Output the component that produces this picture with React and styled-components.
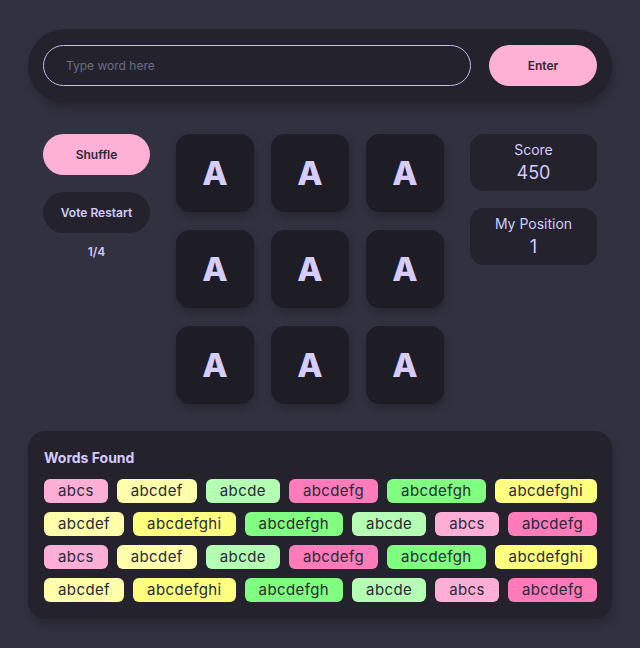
import React from "react";
import styled, { createGlobalStyle } from "styled-components";

const Global = createGlobalStyle`
  html, body { margin: 0; padding: 0; background: #32313f; }
  body { font-family: Inter, "Open Sans", "DejaVu Sans", sans-serif; }
  * { box-sizing: border-box; }
`;

const Page = styled.div`
  width: 640px;
  min-height: 648px;
  padding: 29px 28px 0;
  display: flex;
  flex-direction: column;
`;

const TopBar = styled.div`
  height: 74px;
  background: #23222d;
  border-radius: 37px;
  padding: 16px 15px 17px;
  display: flex;
  gap: 18px;
  box-shadow: 2px 6px 10px rgba(0, 0, 0, 0.22);
`;

const WordInput = styled.input`
  flex: 1;
  height: 41px;
  border: 1px solid #c3bbee;
  border-radius: 21px;
  background: #23222d;
  padding: 0 22px;
  font-family: inherit;
  font-size: 12px;
  color: #d6ccff;
  outline: none;
  &::placeholder { color: #6f6b86; }
`;

const PillButton = styled.button`
  width: ${(p) => p.$w || 107}px;
  height: 41px;
  border: none;
  border-radius: 21px;
  background: ${(p) => (p.$dark ? "#23222d" : "#ffb0d5")};
  color: ${(p) => (p.$dark ? "#d3cbfa" : "#2a2935")};
  font-family: inherit;
  font-weight: 600;
  font-size: 12px;
  cursor: pointer;
  padding: 0;
`;

const Middle = styled.div`
  margin-top: 31px;
  padding: 0 15px;
  display: flex;
  justify-content: space-between;
  align-items: flex-start;
`;

const LeftCol = styled.div`
  width: 107px;
  display: flex;
  flex-direction: column;
  align-items: center;
  gap: 17px;
`;

const Counter = styled.div`
  margin-top: -6px;
  color: #d3cbfa;
  font-weight: 600;
  font-size: 12px;
`;

const Grid = styled.div`
  display: grid;
  grid-template-columns: repeat(3, 78px);
  grid-auto-rows: 78px;
  column-gap: 17px;
  row-gap: 18px;
`;

const Tile = styled.div`
  background: #1e1d26;
  border-radius: 14px;
  display: flex;
  align-items: center;
  justify-content: center;
  color: #d5cdff;
  font-weight: 800;
  font-size: 33px;
  box-shadow: 1px 4px 8px rgba(0, 0, 0, 0.25);
`;

const RightCol = styled.div`
  width: 127px;
  display: flex;
  flex-direction: column;
  gap: 17px;
`;

const StatBox = styled.div`
  height: 57px;
  background: #23222d;
  border-radius: 14px;
  display: flex;
  flex-direction: column;
  align-items: center;
  justify-content: center;
  color: #d3cbfa;
`;

const StatLabel = styled.div`
  font-size: 14px;
  line-height: 18px;
`;

const StatValue = styled.div`
  font-size: 18px;
  line-height: 24px;
  margin-top: 2px;
`;

const WordsPanel = styled.div`
  margin-top: 27px;
  background: #23222d;
  border-radius: 18px;
  padding: 16px 15px 17px 16px;
  box-shadow: 2px 6px 10px rgba(0, 0, 0, 0.22);
`;

const PanelTitle = styled.div`
  color: #d3cbfa;
  font-weight: 700;
  font-size: 14px;
  line-height: 21px;
  margin-bottom: 11px;
`;

const TagRows = styled.div`
  display: flex;
  flex-direction: column;
  gap: 9px;
`;

const TagRow = styled.div`
  display: flex;
  gap: 9px;
`;

const Tag = styled.div`
  height: 24px;
  padding: 0 14px;
  border-radius: 6px;
  background: ${(p) => p.$bg};
  color: #2a2935;
  font-size: 15px;
  letter-spacing: 0.4px;
  line-height: 24px;
  white-space: nowrap;
`;

const colors = {
  abcs: "#ffafd6",
  abcdef: "#ffffab",
  abcde: "#b4ffb4",
  abcdefg: "#ff7bb9",
  abcdefgh: "#80ff80",
  abcdefghi: "#ffff80",
};

const rowA = ["abcs", "abcdef", "abcde", "abcdefg", "abcdefgh", "abcdefghi"];
const rowB = ["abcdef", "abcdefghi", "abcdefgh", "abcde", "abcs", "abcdefg"];
const rows = [rowA, rowB, rowA, rowB];

export default function App() {
  return (
    <>
      <Global />
      <Page>
        <TopBar>
          <WordInput placeholder="Type word here" />
          <PillButton $w={108}>Enter</PillButton>
        </TopBar>
        <Middle>
          <LeftCol>
            <PillButton>Shuffle</PillButton>
            <PillButton $dark>Vote Restart</PillButton>
            <Counter>1/4</Counter>
          </LeftCol>
          <Grid>
            {Array.from({ length: 9 }).map((_, i) => (
              <Tile key={i}>A</Tile>
            ))}
          </Grid>
          <RightCol>
            <StatBox>
              <StatLabel>Score</StatLabel>
              <StatValue>450</StatValue>
            </StatBox>
            <StatBox>
              <StatLabel>My Position</StatLabel>
              <StatValue>1</StatValue>
            </StatBox>
          </RightCol>
        </Middle>
        <WordsPanel>
          <PanelTitle>Words Found</PanelTitle>
          <TagRows>
            {rows.map((r, ri) => (
              <TagRow key={ri}>
                {r.map((w, wi) => (
                  <Tag key={wi} $bg={colors[w]}>
                    {w}
                  </Tag>
                ))}
              </TagRow>
            ))}
          </TagRows>
        </WordsPanel>
      </Page>
    </>
  );
}
